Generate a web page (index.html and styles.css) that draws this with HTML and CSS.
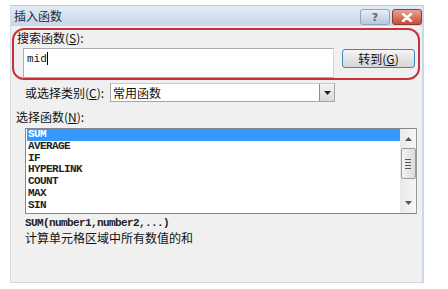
FILE: index.html
```html
<!DOCTYPE html>
<html lang="zh-CN">
<head>
  <meta charset="UTF-8" />
  <title>插入函数</title>
  <link rel="stylesheet" href="styles.css">
</head>
<body>

  <div class="dialog">
    <div class="titlebar">
      <span class="title">插入函数</span>
      <div class="caption-btns">
        <span class="btn-help">?</span>
        <span class="btn-close">
          <svg width="12" height="9" viewBox="0 0 12 9"><path d="M2 1 L10 8 M10 1 L2 8" stroke="#fff" stroke-width="2.4" stroke-linecap="round"/></svg>
        </span>
      </div>
    </div>

    <div class="body">
      <div class="search-box">
        <div class="label">搜索函数(<u>S</u>):</div>
        <div class="search-row">
          <div class="input">mid<span class="caret"></span></div>
          <button class="go-btn">转到(<u>G</u>)</button>
        </div>
      </div>

      <div class="category-row">
        <span class="label">或选择类别(<u>C</u>):</span>
        <div class="select">
          <span class="select-text">常用函数</span>
          <span class="drop-btn">
            <svg width="7" height="4" viewBox="0 0 7 4"><path d="M0 0 H7 L3.5 4 Z" fill="#222"/></svg>
          </span>
        </div>
      </div>

      <div class="label list-label">选择函数(<u>N</u>):</div>

      <div class="listbox">
        <ul class="items">
          <li class="selected">SUM</li>
          <li>AVERAGE</li>
          <li>IF</li>
          <li>HYPERLINK</li>
          <li>COUNT</li>
          <li>MAX</li>
          <li>SIN</li>
        </ul>
        <div class="scrollbar">
          <span class="arrow">
            <svg width="7" height="4" viewBox="0 0 7 4"><path d="M0 4 H7 L3.5 0 Z" fill="#555"/></svg>
          </span>
          <div class="thumb">
            <span class="grip"></span>
            <span class="grip"></span>
            <span class="grip"></span>
            <span class="grip"></span>
          </div>
          <span class="arrow arrow-down">
            <svg width="7" height="4" viewBox="0 0 7 4"><path d="M0 0 H7 L3.5 4 Z" fill="#555"/></svg>
          </span>
        </div>
      </div>

      <div class="syntax">SUM(number1,number2,...)</div>
      <div class="desc">计算单元格区域中所有数值的和</div>
    </div>
  </div>

</body>
</html>
```

FILE: styles.css
```css
body {
  margin: 0;
  background: #fff;
  font-family: "Noto Sans CJK SC", "Noto Sans", sans-serif;
  font-size: 12px;
  color: #111;
}

.dialog {
  box-sizing: border-box;
  width: 414px;
  height: 278px;
  margin: 5px 0 0 10px;
  background: #f0f0f0;
  border-left: 1px solid #d3dce8;
  border-right: 2px solid #c9d8ec;
  border-bottom: 1px solid #d8d8d8;
}

.titlebar {
  height: 21px;
  display: flex;
  justify-content: space-between;
  align-items: center;
  background: linear-gradient(#e3ecf6, #c6d7eb);
  border-top: 1px solid #b8c9dd;
  box-sizing: border-box;
}

.title {
  margin-left: 3px;
  font-size: 12px;
  color: #1b2a3c;
  line-height: 14px;
}

.caption-btns {
  display: flex;
  gap: 2px;
  margin-top: 2px;
}

.btn-help,
.btn-close {
  display: flex;
  align-items: center;
  justify-content: center;
  width: 30px;
  height: 16px;
  box-sizing: border-box;
  border-radius: 3px;
}

.btn-help {
  background: linear-gradient(#e7eef7, #b7c9de);
  border: 1px solid #8ea4bf;
  color: #5a6878;
  font-family: "DejaVu Sans", sans-serif;
  font-weight: bold;
  font-size: 11px;
}

.btn-close {
  background: linear-gradient(#e9a493, #c94b36);
  border: 1px solid #8f3a2c;
}

.body {
  display: flex;
  flex-direction: column;
  align-items: flex-start;
}

.label {
  line-height: 14px;
  font-size: 12px;
  color: #111;
}

.label u {
  text-underline-offset: 1px;
}

.search-box {
  box-sizing: border-box;
  width: 408px;
  height: 52px;
  margin: 2px 0 0 1px;
  padding: 1px 0 0 3px;
  border: 2px solid #c7323a;
  border-radius: 12px;
}

.search-row {
  display: flex;
  align-items: flex-start;
  gap: 8px;
  margin: 3px 0 0 6px;
}

.input {
  box-sizing: border-box;
  width: 311px;
  height: 30px;
  padding: 3px 0 0 3px;
  background: #fff;
  border: 1px solid #abadb3;
  border-right-color: #d8d8d8;
  font-family: "Liberation Mono", monospace;
  font-size: 11px;
  line-height: 14px;
  display: flex;
  align-items: flex-start;
}

.caret {
  width: 1px;
  height: 13px;
  background: #000;
}

.go-btn {
  box-sizing: border-box;
  width: 73px;
  height: 19px;
  margin-top: 1px;
  padding: 0;
  background: linear-gradient(#f6f6f6 0%, #e4e4e4 50%, #d6d6d6 100%);
  border: 1px solid #3f86bb;
  border-radius: 3px;
  font-family: "Noto Sans CJK SC", sans-serif;
  font-size: 12px;
  line-height: 15px;
  color: #111;
}

.category-row {
  display: flex;
  align-items: center;
  margin: 3px 0 0 14px;
}

.category-row .label {
  width: 85px;
}

.select {
  box-sizing: border-box;
  width: 225px;
  height: 19px;
  display: flex;
  align-items: center;
  justify-content: space-between;
  background: #fff;
  border: 1px solid #a5a5a5;
  border-top-color: #c8c8c8;
}

.select-text {
  margin-left: 2px;
  line-height: 14px;
}

.drop-btn {
  box-sizing: border-box;
  width: 15px;
  height: 17px;
  display: flex;
  align-items: center;
  justify-content: center;
  background: linear-gradient(#f4f4f4, #d9d9d9);
  border-left: 1px solid #8c8c8c;
}

.list-label {
  margin: 8px 0 0 5px;
}

.listbox {
  box-sizing: border-box;
  width: 392px;
  height: 86px;
  margin: 4px 0 0 14px;
  display: flex;
  background: #fff;
  border: 1px solid #828790;
  border-right-color: #9a9a9a;
}

.items {
  flex: 1;
  margin: 0;
  padding: 0 0 0 1px;
  list-style: none;
  font-family: "Liberation Mono", monospace;
  font-size: 11px;
  letter-spacing: -0.6px;
  font-weight: bold;
  color: #222;
}

.items li {
  height: 11.8px;
  line-height: 11.8px;
  padding-left: 1px;
}

.items li.selected {
  background: #3399ff;
  color: #fff;
}

.scrollbar {
  width: 16px;
  display: flex;
  flex-direction: column;
  align-items: center;
  background: linear-gradient(90deg, #e9e9e9, #f6f6f6);
}

.arrow {
  height: 16px;
  display: flex;
  align-items: center;
  justify-content: center;
  margin-top: 2px;
}

.arrow-down {
  margin-top: auto;
  margin-bottom: 2px;
}

.thumb {
  box-sizing: border-box;
  width: 15px;
  height: 31px;
  margin-top: 1px;
  display: flex;
  flex-direction: column;
  align-items: center;
  justify-content: center;
  gap: 2px;
  background: linear-gradient(90deg, #f2f2f2, #dcdcdc);
  border: 1px solid #9b9b9b;
  border-radius: 2px;
}

.grip {
  width: 6px;
  height: 1px;
  background: #555;
}

.syntax {
  margin: 2px 0 0 14px;
  font-family: "Liberation Mono", monospace;
  font-size: 11px;
  letter-spacing: -0.6px;
  font-weight: bold;
  line-height: 14px;
  color: #222;
}

.desc {
  margin: 0 0 0 14px;
  font-size: 12px;
  line-height: 16px;
  color: #111;
}
```
